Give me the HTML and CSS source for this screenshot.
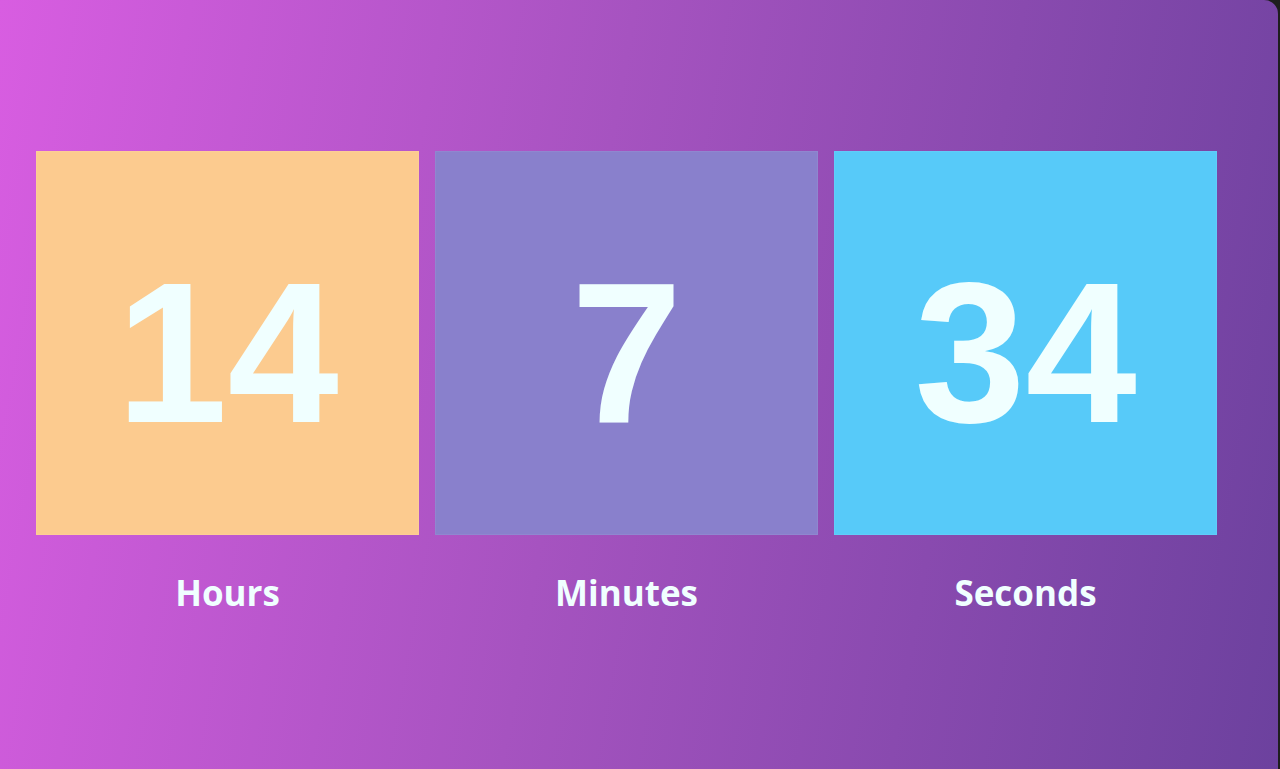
FILE: index.html
```html
<!DOCTYPE html>
<html>
<head>
<meta charset="utf-8">
<link rel="stylesheet" href="styles.css">
</head>
<body>
<main class="screen">
  <section class="timer">
    <div class="unit">
      <div class="box box-hours"><span class="num">14</span></div>
      <div class="label">Hours</div>
    </div>
    <div class="unit">
      <div class="box box-minutes"><span class="num">7</span></div>
      <div class="label">Minutes</div>
    </div>
    <div class="unit">
      <div class="box box-seconds"><span class="num">34</span></div>
      <div class="label">Seconds</div>
    </div>
  </section>
</main>
</body>
</html>
```
FILE: styles.css
```css
html, body {
  margin: 0;
  padding: 0;
  background: #1e1e1e;
}
.screen {
  width: 1278px;
  height: 769px;
  box-sizing: border-box;
  padding: 151px 0 0 36px;
  background: linear-gradient(100deg, #d85de1 0%, #a653c0 45%, #6c419e 100%);
  border-top-right-radius: 14px;
  font-family: "Open Sans", "Noto Sans", sans-serif;
  color: #f0ffff;
}
.timer {
  display: grid;
  grid-template-columns: repeat(3, 383px);
  column-gap: 16px;
}
.unit {
  display: flex;
  flex-direction: column;
  align-items: center;
}
.box {
  width: 383px;
  height: 384px;
  box-sizing: border-box;
  border: 1px solid rgba(255, 255, 255, 0.06);
  display: flex;
  align-items: center;
  justify-content: center;
  padding-top: 19px;
}
.box-hours { background: #fccb8f; }
.box-minutes { background: #8980cc; }
.box-seconds { background: #57caf9; }
.num {
  font-family: "Liberation Sans", Arial, sans-serif;
  font-size: 200px;
  font-weight: 700;
  line-height: 1;
}
.label {
  margin-top: 36px;
  font-size: 35px;
  font-weight: 700;
  line-height: 44px;
}
```
